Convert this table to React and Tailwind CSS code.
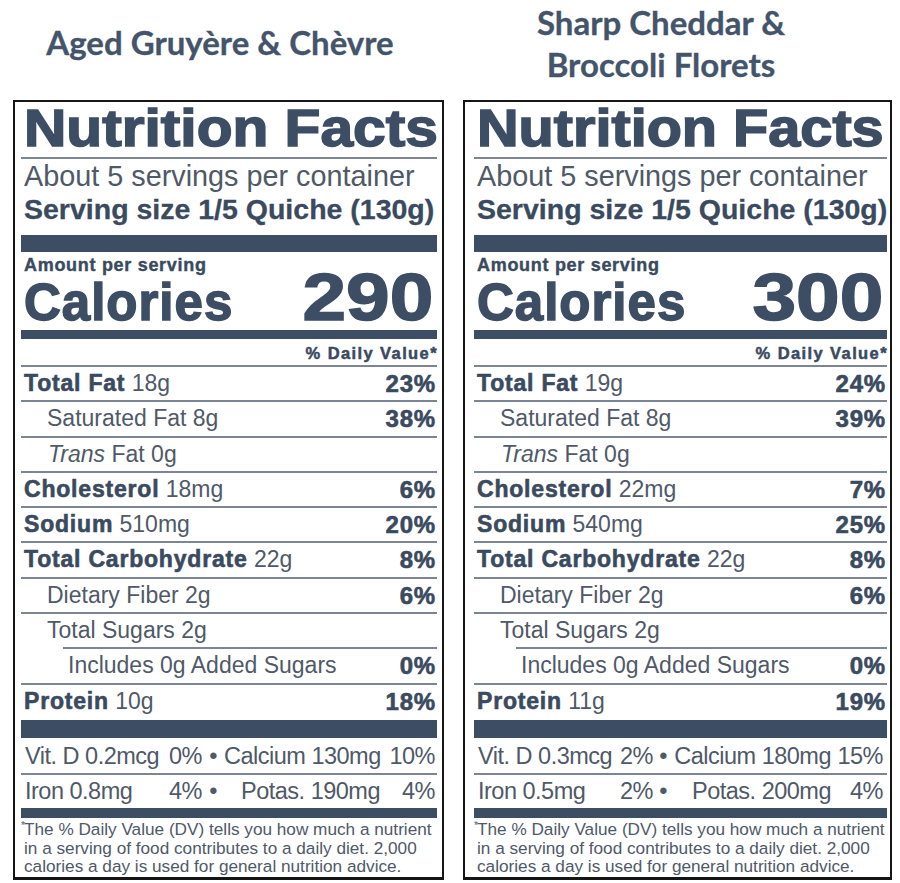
const labels = [
  {
    title: ["Aged Gruyère & Chèvre"],
    titleCls: "w-[431px] pt-[21px] pr-[17px]",
    panelCls: "w-[431px] pl-[6px] pr-[5px]",
    headCls: "scale-x-[1.15]",
    calories: "290",
    fat: ["18g", "23%"],
    sat: ["8g", "38%"],
    chol: ["18mg", "6%"],
    sodium: ["510mg", "20%"],
    carb: ["22g", "8%"],
    fiber: ["2g", "6%"],
    sugars: "2g",
    added: ["0g", "0%"],
    protein: ["10g", "18%"],
    vit: ["Vit. D 0.2mcg", "0%", "Calcium 130mg", "10%"],
    iron: ["Iron 0.8mg", "4%", "Potas. 190mg", "4%"],
    cols: ["w-[181px]", "w-[22px]", "w-[156px]", "pr-[2px]"],
  },
  {
    title: ["Sharp Cheddar &", "Broccoli Florets"],
    titleCls: "w-[429px] pt-[1px] pr-[33px]",
    panelCls: "w-[429px] pl-[9px] pr-[3px]",
    headCls: "scale-x-[1.13]",
    calories: "300",
    fat: ["19g", "24%"],
    sat: ["8g", "39%"],
    chol: ["22mg", "7%"],
    sodium: ["540mg", "25%"],
    carb: ["22g", "8%"],
    fiber: ["2g", "6%"],
    sugars: "2g",
    added: ["0g", "0%"],
    protein: ["11g", "19%"],
    vit: ["Vit. D 0.3mcg", "2%", "Calcium 180mg", "15%"],
    iron: ["Iron 0.5mg", "2%", "Potas. 200mg", "4%"],
    cols: ["w-[179px]", "w-[20px]", "w-[158px]", "pr-[4px]"],
  },
]

// heavy labels: Liberation bold, a bit wider and thicker
const boldCls = "font-bold tracking-[0.8px] text-[#3a4a5f] [-webkit-text-stroke:0.6px_#3a4a5f]"

function Row({ children, pct, indent = "pl-[3px]", line = true }) {
  return (
    <div
      className={`flex h-[35.3px] justify-between text-[23px] leading-[33.3px] ${indent} ${
        line ? "border-b-2 border-[#7b8594]" : ""
      }`}
    >
      <div className="whitespace-nowrap">{children}</div>
      {pct && <div className={`pr-[1px] text-[24px] ${boldCls}`}>{pct}</div>}
    </div>
  )
}

function Minerals({ data, cols, cls }) {
  return (
    <div className={`flex whitespace-nowrap text-[23.5px] tracking-[-0.5px] ${cls}`}>
      <div className={`flex justify-between pl-[4px] ${cols[0]}`}>
        <span>{data[0]}</span>
        <span>{data[1]}</span>
      </div>
      <div className={`text-center ${cols[1]}`}>•</div>
      <div className={`text-right ${cols[2]}`}>{data[2]}</div>
      <div className={`flex-1 text-right ${cols[3]}`}>{data[3]}</div>
    </div>
  )
}

function Label({ d }) {
  return (
    <div className="flex flex-col">
      <div
        className={`h-[100px] text-center font-['Lato','Open_Sans',sans-serif] text-[33px] font-bold leading-[42px] text-[#44546a] [-webkit-text-stroke:0.3px_#44546a] ${d.titleCls}`}
      >
        {d.title.map((t) => (
          <div key={t}>{t}</div>
        ))}
      </div>

      <div
        className={`h-[780px] overflow-hidden border-x-2 border-t-2 border-b-[3px] border-[#151515] bg-white font-['Liberation_Sans',Arial,sans-serif] text-[#4f5968] ${d.panelCls}`}
      >
        <div className="h-[57px] border-b-2 border-[#7b8594] pl-[3px] pt-[1px]">
          <div
            className={`inline-block origin-left whitespace-nowrap text-[51px] font-bold leading-[52px] text-[#3d4e64] [-webkit-text-stroke:1.5px_#3d4e64] ${d.headCls}`}
          >
            Nutrition Facts
          </div>
        </div>
        <div className="h-[35px] whitespace-nowrap pl-[3px] text-[28.8px] leading-[35px]">
          About 5 servings per container
        </div>
        <div className="h-[41px] whitespace-nowrap pl-[3px] text-[28.5px] font-bold leading-[30px] text-[#3a4a5f] [-webkit-text-stroke:0.3px_#3a4a5f]">
          Serving size 1/5 Quiche (130g)
        </div>
        <div className="h-[17px] bg-[#3d4e64]" />
        <div className="h-[26px] pl-[3px] pt-[2px] text-[18px] font-bold leading-[22px] tracking-[0.7px] text-[#3a4a5f] [-webkit-text-stroke:0.4px_#3a4a5f]">
          Amount per serving
        </div>
        <div className="flex h-[52px] items-baseline justify-between pl-[3px] font-bold text-[#3d4e64]">
          <span className="text-[51px] leading-[36px] tracking-[1px] [-webkit-text-stroke:1.5px_#3d4e64]">
            Calories
          </span>
          <span className="inline-block origin-right scale-x-[1.17] pr-[3px] text-[67px] leading-[38px] [-webkit-text-stroke:1.5px_#3d4e64]">
            {d.calories}
          </span>
        </div>
        <div className="h-[9px] bg-[#3d4e64]" />
        <div className="h-[28px] border-b-2 border-[#7b8594] pt-[2px] text-right">
          <span className="-mr-[1px] text-[16.5px] font-bold leading-[24px] tracking-[1.4px] text-[#3a4a5f] [-webkit-text-stroke:0.5px_#3a4a5f]">
            % Daily Value*
          </span>
        </div>

        <Row pct={d.fat[1]}>
          <span className={boldCls}>Total Fat</span> {d.fat[0]}
        </Row>
        <Row pct={d.sat[1]} indent="pl-[26px]">
          Saturated Fat {d.sat[0]}
        </Row>
        <Row indent="pl-[27px]">
          <i>Trans</i> Fat 0g
        </Row>
        <Row pct={d.chol[1]}>
          <span className={boldCls}>Cholesterol</span> {d.chol[0]}
        </Row>
        <Row pct={d.sodium[1]}>
          <span className={boldCls}>Sodium</span> {d.sodium[0]}
        </Row>
        <Row pct={d.carb[1]}>
          <span className={boldCls}>Total Carbohydrate</span> {d.carb[0]}
        </Row>
        <Row pct={d.fiber[1]} indent="pl-[26px]">
          Dietary Fiber {d.fiber[0]}
        </Row>
        <div className="h-[33.3px] pl-[26px] text-[23px] leading-[33.3px]">Total Sugars {d.sugars}</div>
        <div className="ml-[42px] h-[2px] bg-[#7b8594]" />
        <Row pct={d.added[1]} indent="pl-[47px]">
          Includes {d.added[0]} Added Sugars
        </Row>
        <Row pct={d.protein[1]} line={false}>
          <span className={boldCls}>Protein</span> {d.protein[0]}
        </Row>
        <div className="h-[18px] bg-[#3d4e64]" />

        <Minerals
          data={d.vit}
          cols={d.cols}
          cls="h-[37px] border-b-2 border-[#7b8594] pt-[1px] leading-[34px]"
        />
        <Minerals data={d.iron} cols={d.cols} cls="h-[33px] leading-[33px]" />
        <div className="h-[10px] bg-[#3d4e64]" />

        <div className="whitespace-nowrap pt-[2px] text-[17.2px] leading-[18.6px]">
          <div>
            <span className="inline-block w-[3px] align-top text-[10px] leading-[12px]">*</span>
            The % Daily Value (DV) tells you how much a nutrient
          </div>
          <div className="pl-[3px]">in a serving of food contributes to a daily diet. 2,000</div>
          <div className="pl-[3px]">calories a day is used for general nutrition advice.</div>
        </div>
      </div>
    </div>
  )
}

export default function App() {
  return (
    <div className="flex h-[883px] w-[900px] gap-[19px] bg-white pl-[13px]">
      {labels.map((d) => (
        <Label key={d.calories} d={d} />
      ))}
    </div>
  )
}
